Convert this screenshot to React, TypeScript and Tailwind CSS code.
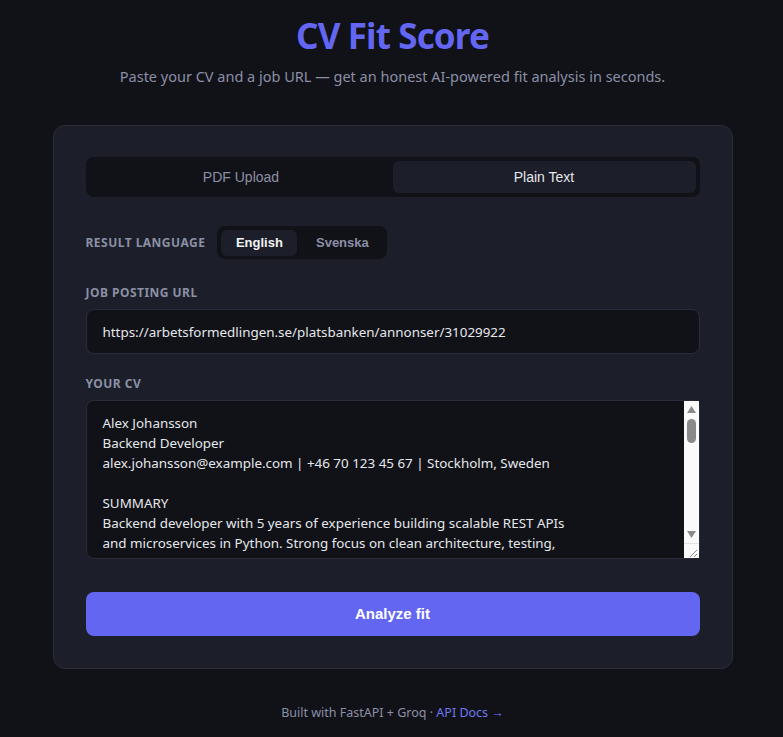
import React, { useState } from "react";

const SAMPLE_CV = `Alex Johansson
Backend Developer
alex.johansson@example.com | +46 70 123 45 67 | Stockholm, Sweden

SUMMARY
Backend developer with 5 years of experience building scalable REST APIs
and microservices in Python. Strong focus on clean architecture, testing,
and developer experience. Comfortable owning services end to end.

EXPERIENCE
Senior Backend Developer — Klarna, Stockholm (2022 – present)
- Designed and shipped payment reconciliation services in FastAPI
- Cut p95 latency by 40% through query tuning and caching with Redis
- Mentored three junior developers

Backend Developer — Spotify, Stockholm (2019 – 2022)
- Built internal tooling for data pipelines using Python and PostgreSQL
- Maintained CI/CD pipelines on GitHub Actions and Kubernetes

SKILLS
Python, FastAPI, Django, PostgreSQL, Redis, Docker, Kubernetes, AWS`;

// Classic light scrollbar drawn over the CV textarea's right edge
function ScrollRail() {
  return (
    <div className="pointer-events-none absolute right-[1px] top-[1px] bottom-[1px] flex w-[15px] flex-col items-center bg-[#fafafa]">
      <svg width="9" height="7" viewBox="0 0 9 7" className="mt-[5px]">
        <path d="M4.5 0 L9 7 L0 7 Z" fill="#8a8a8a" />
      </svg>
      <div className="mt-[6px] h-[24px] w-[9px] rounded-full bg-[#8a8a8a]" />
      <div className="flex-1" />
      <svg width="9" height="7" viewBox="0 0 9 7" className="mb-[5px]">
        <path d="M0 0 L9 0 L4.5 7 Z" fill="#8a8a8a" />
      </svg>
      <div className="h-[15px] w-full border-t border-[#e2e2e2] bg-[#fafafa]">
        <svg width="15" height="14" viewBox="0 0 15 14">
          <path d="M13 6 L6 13 M13 10 L10 13" stroke="#8a8a8a" strokeWidth="1" />
        </svg>
      </div>
    </div>
  );
}

export default function App() {
  const [mode, setMode] = useState<"pdf" | "text">("text");
  const [lang, setLang] = useState<"en" | "sv">("en");
  const [url, setUrl] = useState(
    "https://arbetsformedlingen.se/platsbanken/annonser/31029922"
  );
  const [cv, setCv] = useState(SAMPLE_CV);

  const ui = { fontFamily: '"Segoe UI", "Noto Sans", sans-serif' };
  const arial = { fontFamily: '"Liberation Sans", Arial, sans-serif' };

  return (
    <div
      className="min-h-screen bg-[#111218] text-[#e5e7eb] flex flex-col items-center pt-[14px] pl-[2px]"
      style={ui}
    >
      {/* Header */}
      <h1 className="text-[35px] leading-[44px] font-bold text-[#6366f1] tracking-tight">
        CV Fit Score
      </h1>
      <p className="mt-[8px] text-[14.5px] leading-5 text-[#8b8fa6]">
        Paste your CV and a job URL — get an honest AI-powered fit analysis in seconds.
      </p>

      {/* Main card */}
      <div className="mt-[39px] w-[680px] rounded-xl border border-[#2a2c3a] bg-[#1c1e29] px-8 pt-[31px] pb-8">
        {/* Input mode tabs */}
        <div className="flex h-10 rounded-lg bg-[#111218] p-1" style={arial}>
          <button
            onClick={() => setMode("pdf")}
            className={`flex-1 rounded-md text-sm ${
              mode === "pdf" ? "bg-[#1c1e29] text-[#e5e7eb]" : "text-[#8b8fa3]"
            }`}
          >
            PDF Upload
          </button>
          <button
            onClick={() => setMode("text")}
            className={`flex-1 rounded-md text-sm ${
              mode === "text" ? "bg-[#1c1e29] text-[#e5e7eb]" : "text-[#8b8fa3]"
            }`}
          >
            Plain Text
          </button>
        </div>

        {/* Result language */}
        <div className="mt-[29px] flex items-center gap-3">
          <span className="text-xs font-bold uppercase tracking-[0.04em] text-[#8b8fa6]">
            Result language
          </span>
          <div className="flex h-[33px] items-center gap-1 rounded-lg bg-[#111218] p-1" style={arial}>
            <button
              onClick={() => setLang("en")}
              className={`h-[26px] w-[76px] rounded-md text-[13px] font-bold ${
                lang === "en" ? "bg-[#1c1e29] text-[#f3f4f6]" : "text-[#8b8fa6]"
              }`}
            >
              English
            </button>
            <button
              onClick={() => setLang("sv")}
              className={`h-[26px] w-[82px] rounded-md text-[13px] font-bold ${
                lang === "sv" ? "bg-[#1c1e29] text-[#f3f4f6]" : "text-[#8b8fa6]"
              }`}
            >
              Svenska
            </button>
          </div>
        </div>

        {/* Job URL */}
        <label className="mt-[26px] mb-2 block text-xs font-bold uppercase tracking-[0.04em] leading-4 text-[#8b8fa6]">
          Job posting URL
        </label>
        <input
          value={url}
          onChange={(e) => setUrl(e.target.value)}
          className="block h-[45px] w-full rounded-lg border border-[#2a2c3a] bg-[#111218] px-4 text-[13.4px] text-[#e5e7eb] outline-none focus:border-[#6366f1]"
        />

        {/* CV text */}
        <label className="mt-[22px] mb-2 block text-xs font-bold uppercase tracking-[0.04em] leading-4 text-[#8b8fa6]">
          Your CV
        </label>
        <div className="relative">
          <textarea
            value={cv}
            onChange={(e) => setCv(e.target.value)}
            className="block h-[159px] w-full resize-none rounded-lg border border-[#2a2c3a] bg-[#111218] pl-4 pr-6 py-3 text-[13.4px] leading-5 text-[#e5e7eb] outline-none focus:border-[#6366f1]"
          />
          <ScrollRail />
        </div>

        {/* Submit */}
        <button
          className="mt-[33px] h-11 w-full rounded-lg bg-[#6366f1] text-[15px] font-bold text-white hover:bg-[#5558e6]"
          style={arial}
        >
          Analyze fit
        </button>
      </div>

      {/* Footer */}
      <p className="mt-[35px] text-[12.5px] text-[#8b8fa6]">
        Built with FastAPI + Groq ·{" "}
        <a href="#" className="text-[#7078f2]">
          API Docs →
        </a>
      </p>
    </div>
  );
}
